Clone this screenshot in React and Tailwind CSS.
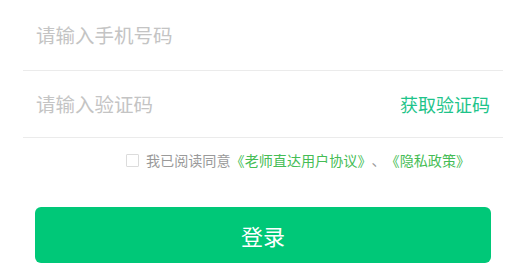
import { useState } from "react";

export default function App() {
    const [phone, setPhone] = useState("");
    const [code, setCode] = useState("");
    const [agreed, setAgreed] = useState(false);

    return (
        <div
            className="w-[515px] h-[277px] bg-white overflow-hidden"
            style={{ fontFamily: '"Noto Sans CJK SC", "Noto Sans", sans-serif' }}
        >
            {/* Form fields */}
            <div className="ml-[23px] mr-[12px]">
                <div className="h-[71px] flex items-center border-b border-[#ebebeb] pl-[13px] pb-[1px]">
                    <input
                        value={phone}
                        onChange={e => setPhone(e.target.value)}
                        placeholder="请输入手机号码"
                        className="flex-1 outline-none text-[19.5px] text-[#333] placeholder:text-[#c4c4c4] bg-transparent"
                    />
                </div>
                <div className="h-[67px] flex items-center border-b border-[#ebebeb] pl-[13px] pr-[13px]">
                    <input
                        value={code}
                        onChange={e => setCode(e.target.value)}
                        placeholder="请输入验证码"
                        className="flex-1 outline-none text-[19.5px] text-[#333] placeholder:text-[#c4c4c4] bg-transparent"
                    />
                    <button className="text-[18px] text-[#1ec48a] leading-none">获取验证码</button>
                </div>
            </div>

            {/* Agreement */}
            <div className="flex items-center pl-[126px] mt-[15px] h-[14px]">
                <button
                    onClick={() => setAgreed(!agreed)}
                    className={`w-[13px] h-[13px] border rounded-[1px] shrink-0 ${agreed ? 'bg-[#3dbd55] border-[#3dbd55]' : 'border-[#dcdcdc] bg-white'}`}
                ></button>
                <p className="ml-[7px] text-[14.1px] leading-none text-[#9a9a9a] whitespace-nowrap [text-spacing-trim:space-all]">
                    我已阅读同意<span className="text-[#45bd55]">《老师直达用户协议》</span>、<span className="text-[#45bd55]">《隐私政策》</span>
                </p>
            </div>

            {/* Submit */}
            <button className="ml-[35px] mt-[40px] w-[456px] h-[56px] rounded-[6px] bg-[#00c878] text-white text-[22px] flex items-center justify-center">
                登录
            </button>
        </div>
    );
}
